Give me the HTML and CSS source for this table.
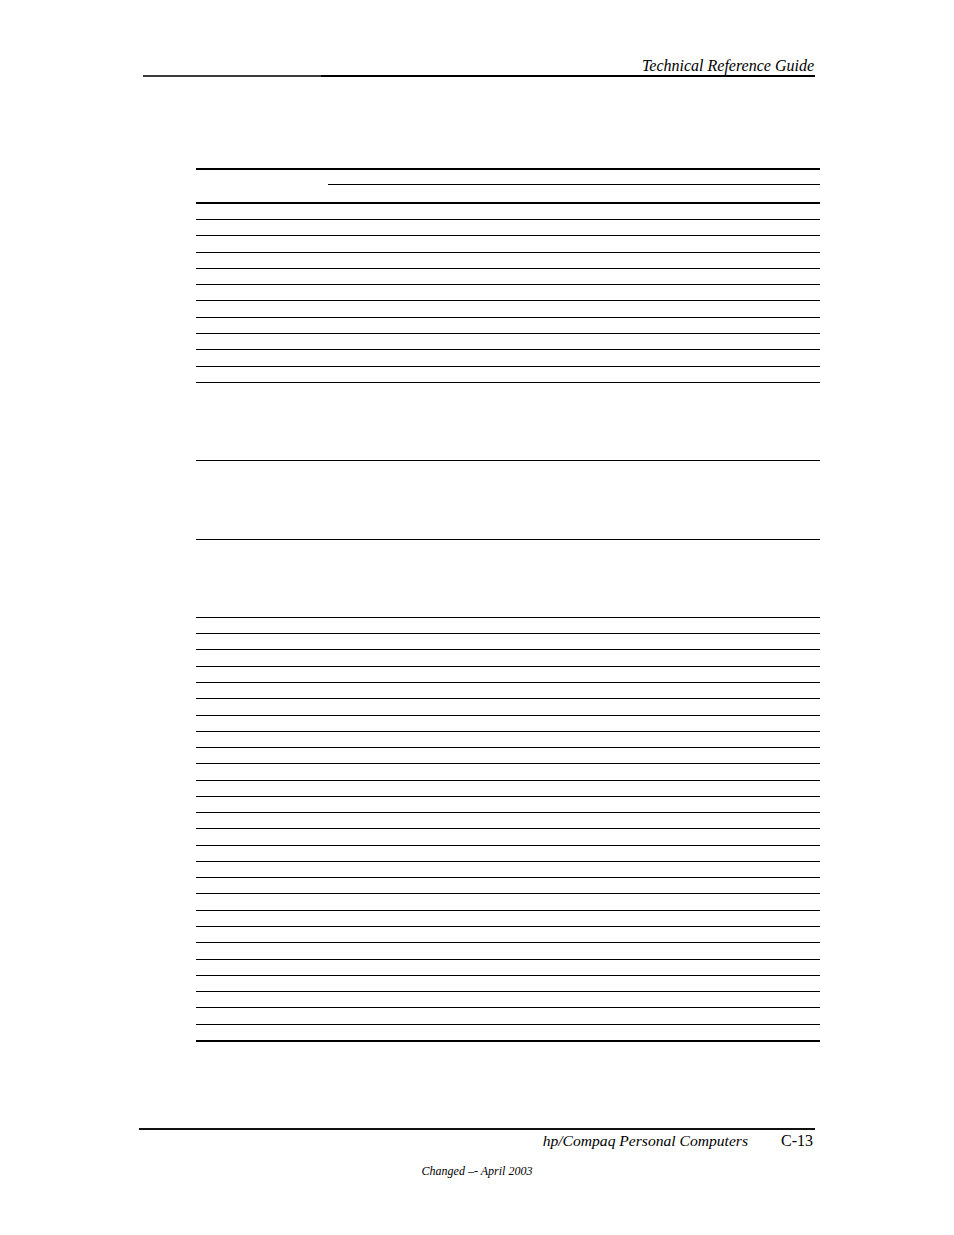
FILE: index.html
```html
<!DOCTYPE html>
<html lang="en">
<head>
<meta charset="utf-8">
<title>Technical Reference Guide C-13</title>
<link rel="stylesheet" href="styles.css">
</head>
<body>
<div class="page">
  <header class="running-head">
    <div class="head-title">Technical Reference Guide</div>
    <div class="head-rule"></div>
  </header>

  <section class="ruled-table">
    <div class="thead">
      <div class="th-top"></div>
      <div class="th-sub"></div>
    </div>
    <div class="group-a">
      <div class="row"></div><div class="row"></div><div class="row"></div><div class="row"></div>
      <div class="row"></div><div class="row"></div><div class="row"></div><div class="row"></div>
      <div class="row"></div><div class="row"></div><div class="row"></div>
    </div>
    <div class="group-b">
      <div class="row tall"></div><div class="row tall"></div><div class="row tall"></div>
    </div>
    <div class="group-c">
      <div class="row"></div><div class="row"></div><div class="row"></div><div class="row"></div><div class="row"></div>
      <div class="row"></div><div class="row"></div><div class="row"></div><div class="row"></div><div class="row"></div>
      <div class="row"></div><div class="row"></div><div class="row"></div><div class="row"></div><div class="row"></div>
      <div class="row"></div><div class="row"></div><div class="row"></div><div class="row"></div><div class="row"></div>
      <div class="row"></div><div class="row"></div><div class="row"></div><div class="row"></div><div class="row"></div>
      <div class="row last"></div>
    </div>
  </section>

  <footer class="running-foot">
    <div class="foot-rule"></div>
    <div class="foot-row">
      <span class="foot-title">hp/Compaq Personal Computers</span>
      <span class="foot-page">C-13</span>
    </div>
    <div class="foot-note">Changed –- April 2003</div>
  </footer>
</div>
</body>
</html>
```

FILE: styles.css
```css
html, body {
  margin: 0;
  padding: 0;
  background: #fff;
}

.page {
  width: 954px;
  min-height: 1235px;
  padding-top: 57px;
  box-sizing: border-box;
  font-family: "Liberation Serif", "Times New Roman", serif;
  color: #000;
}

.running-head {
  margin-left: 143px;
  width: 672px;
}

.head-title {
  font-style: italic;
  font-size: 16px;
  line-height: 18px;
  text-align: right;
  padding-right: 1px;
}

.head-rule {
  height: 2px;
  background: linear-gradient(to right, #3c3c3c 0, #3c3c3c 178px, #000 178px, #000 100%);
}

.ruled-table {
  margin-top: 91px;
  margin-left: 196px;
  width: 624px;
  border-top: 2px solid #000;
}

.thead {
  height: 31.7px;
  border-bottom: 2px solid #000;
}

.th-top {
  height: 14px;
}

.th-sub {
  margin-left: 132px;
  border-top: 1px solid #000;
}

.row {
  box-sizing: border-box;
  border-bottom: 1px solid #000;
}

.group-a .row {
  height: 16.3px;
}

.group-b .row.tall {
  height: 78.33px;
}

.group-c .row {
  height: 16.27px;
}

.group-c .row.last {
  height: 17.27px;
  border-bottom-width: 2px;
}

.running-foot {
  margin-top: 86px;
}

.foot-rule {
  margin-left: 139px;
  width: 676px;
  height: 2px;
  background: #111;
}

.foot-row {
  margin-left: 139px;
  width: 674px;
  padding-top: 2px;
  display: flex;
  justify-content: flex-end;
  align-items: baseline;
  gap: 33px;
  font-size: 16px;
  line-height: 18px;
}

.foot-title {
  font-style: italic;
  font-size: 15.6px;
}

.foot-note {
  margin-top: 14px;
  text-align: center;
  font-style: italic;
  font-size: 12px;
  line-height: 14px;
}
```
